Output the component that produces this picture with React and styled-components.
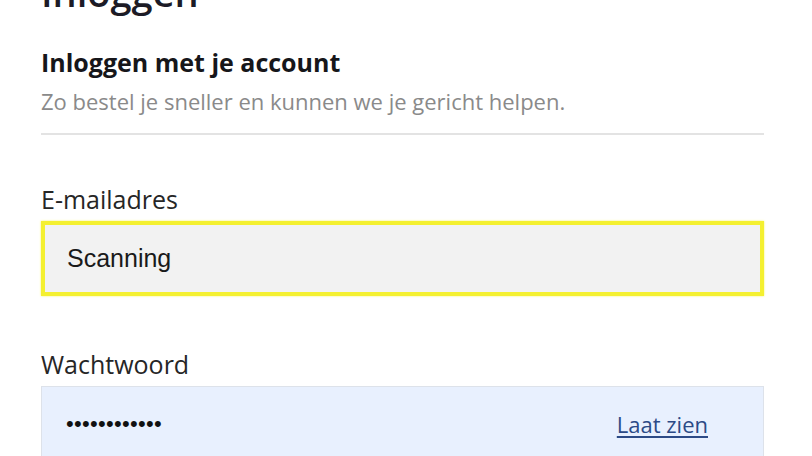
import styled, { createGlobalStyle } from "styled-components";

const GlobalStyle = createGlobalStyle`
    html, body {
        margin: 0;
        padding: 0;
        background: #ffffff;
        overflow: hidden;
    }
    body {
        font-family: "Open Sans", "Noto Sans", sans-serif;
        color: #1d1d1f;
    }
`;

const StyledLogin = styled.div`
    padding: 0 48px 0 41px;
`;
const Title = styled.h1`
    margin: -31px 0 0;
    font-size: 38px;
    font-weight: 600;
    line-height: 46px;
    color: #1c1b26;
`;
const Intro = styled.div`
    margin-top: 32px;
    padding-bottom: 18px;
    border-bottom: 2px solid #e3e3e3;
`;
const Heading = styled.h2`
    margin: 0;
    font-size: 25px;
    font-weight: 700;
    line-height: 30px;
    color: #16161a;
`;
const Description = styled.p`
    margin: 10px 0 0;
    font-size: 22px;
    line-height: 28px;
    color: #8a8a8a;
`;
const Field = styled.div`
    margin-top: ${(p) => p.$gap}px;
`;
const Label = styled.label`
    display: block;
    font-size: 25px;
    line-height: 32px;
    color: #262626;
    margin-bottom: 6px;
`;
const InputBox = styled.div`
    box-sizing: border-box;
    height: 75px;
    display: flex;
    align-items: center;
    justify-content: space-between;
    padding: 0 55px 0 25px;
    background: ${(p) => (p.$autofill ? "#e8f0fe" : "#f2f2f2")};
    border: ${(p) => (p.$focused ? "4px solid #f4f030" : "1px solid #dde2ea")};
    box-shadow: ${(p) => (p.$focused ? "0 0 2px #f7f36a" : "none")};
    padding-left: ${(p) => (p.$focused ? "22px" : "24px")};
`;
const Value = styled.span`
    font-family: "Liberation Sans", Arial, sans-serif;
    font-size: 25px;
    color: #1a1a1a;
`;
const Dots = styled.span`
    font-family: "Liberation Sans", Arial, sans-serif;
    font-size: 22px;
    letter-spacing: 0.3px;
    color: #111111;
`;
const ShowLink = styled.a`
    font-size: 22px;
    color: #2c4a86;
    text-decoration: underline;
    text-underline-offset: 3px;
    cursor: pointer;
`;

function App() {
    return (
        <>
            <GlobalStyle />
            <StyledLogin>
                <Title>Inloggen</Title>
                <Intro>
                    <Heading>Inloggen met je account</Heading>
                    <Description>Zo bestel je sneller en kunnen we je gericht helpen.</Description>
                </Intro>
                <Field $gap={48}>
                    <Label>E-mailadres</Label>
                    <InputBox $focused>
                        <Value>Scanning</Value>
                    </InputBox>
                </Field>
                <Field $gap={52}>
                    <Label>Wachtwoord</Label>
                    <InputBox $autofill>
                        <Dots>••••••••••••</Dots>
                        <ShowLink>Laat zien</ShowLink>
                    </InputBox>
                </Field>
            </StyledLogin>
        </>
    );
}

export default App;
